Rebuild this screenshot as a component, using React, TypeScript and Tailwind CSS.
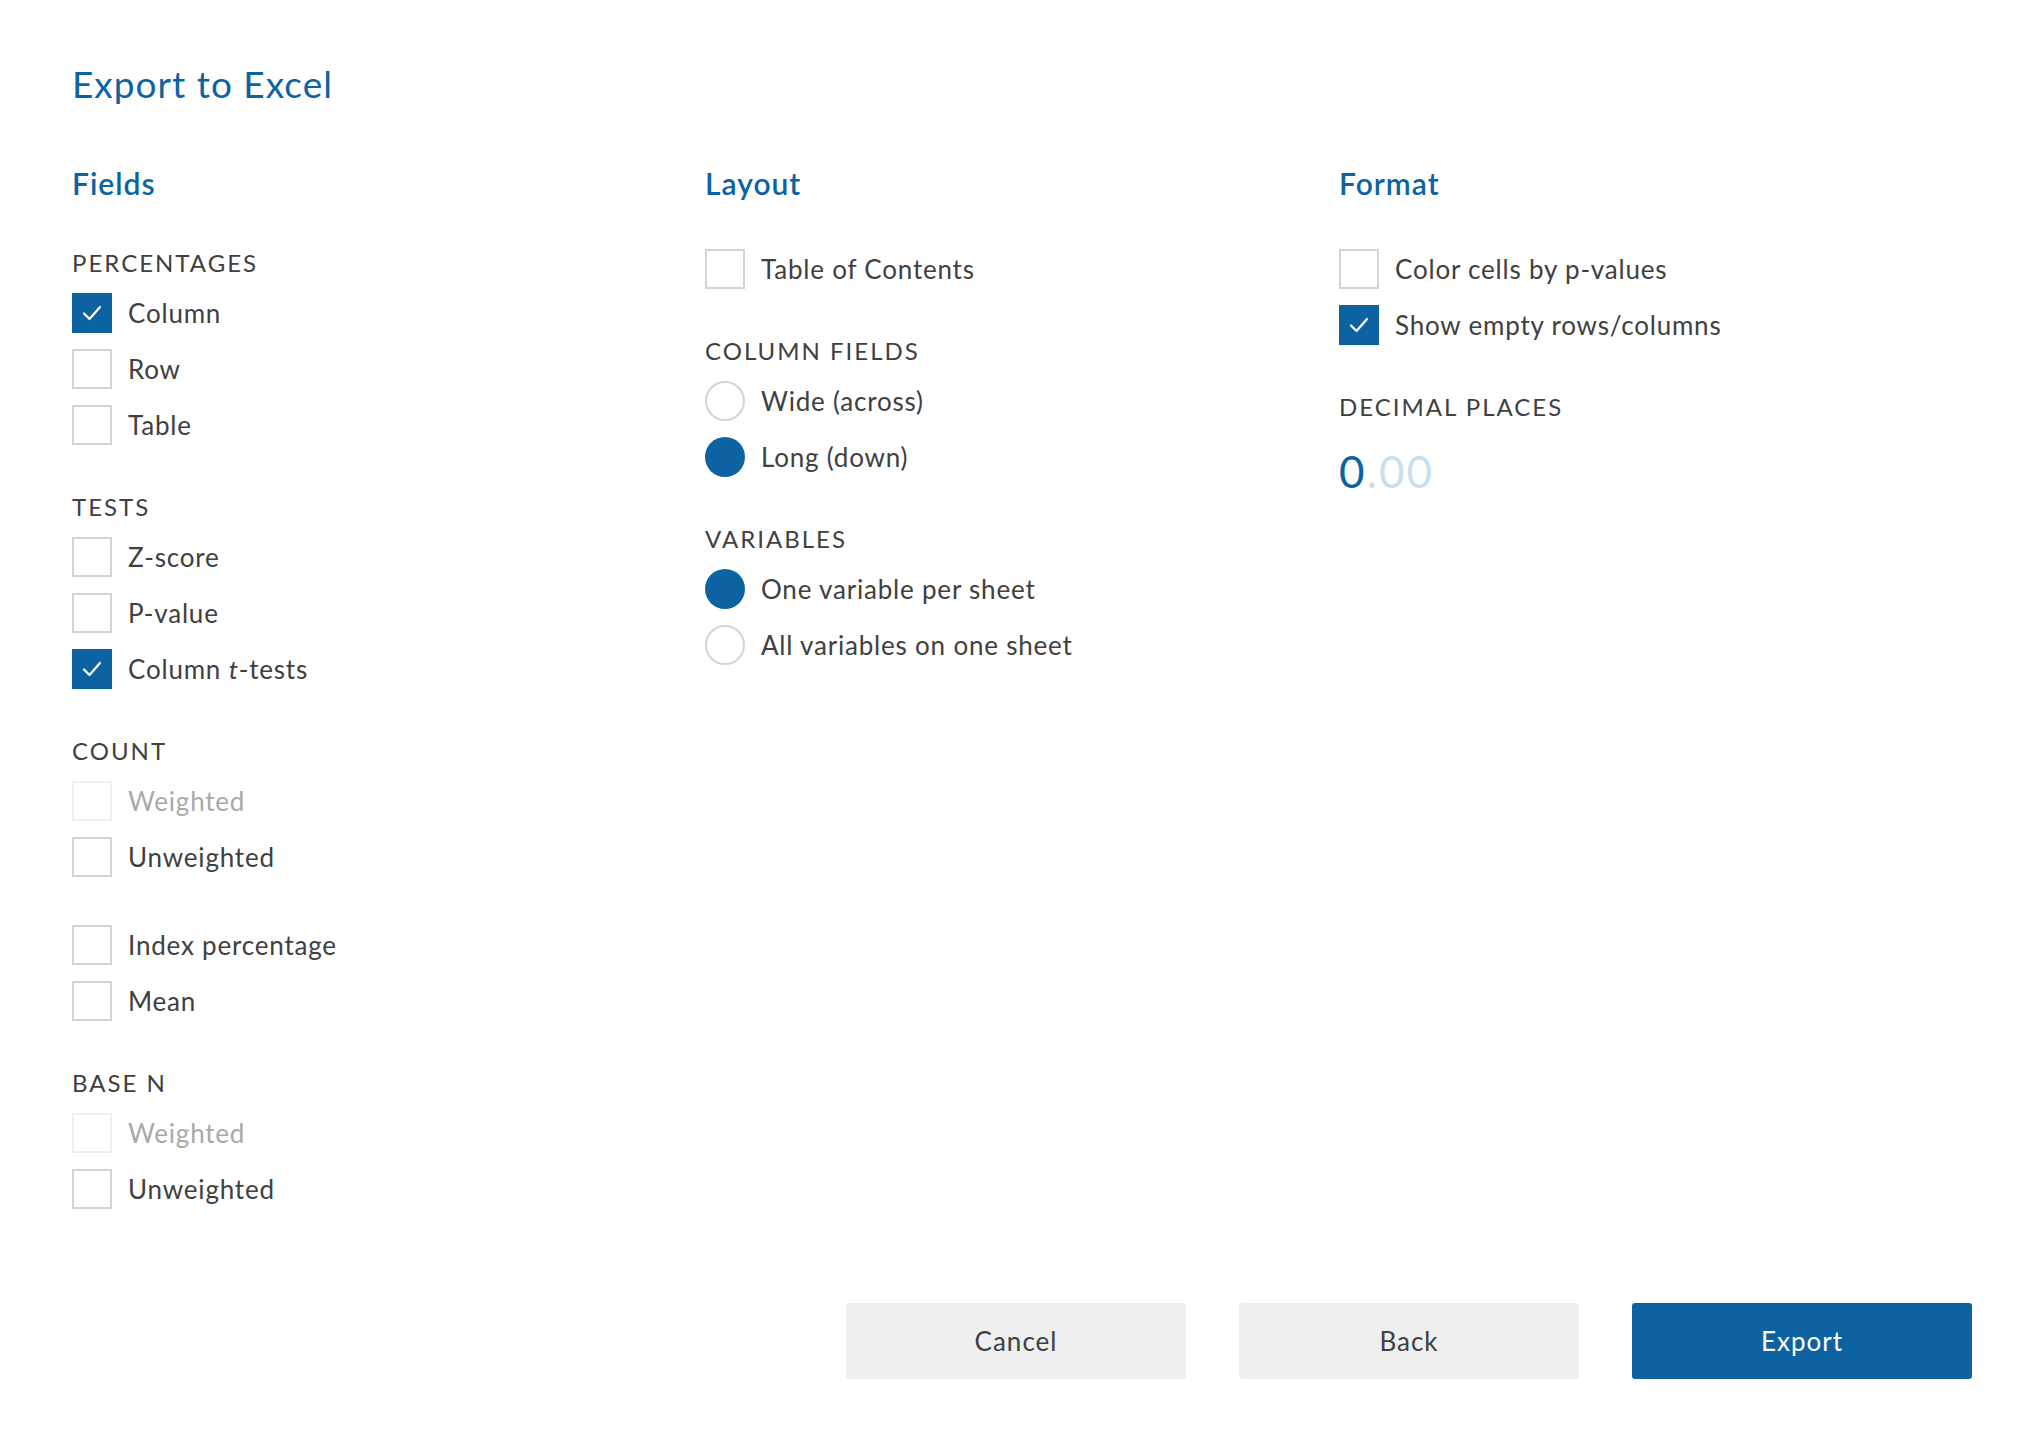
import { ReactNode } from 'react'

const BLUE = '#0d63a2'

function Check() {
  return (
    <svg width="20" height="16" viewBox="0 0 20 16" fill="none">
      <path d="M2 8.5 L7.5 14 L18 2" stroke="white" strokeWidth="2.2" strokeLinecap="round" strokeLinejoin="round" />
    </svg>
  )
}

function CheckboxRow({ label, checked, disabled }: { label: ReactNode; checked?: boolean; disabled?: boolean }) {
  return (
    <div className="flex h-[40px] items-center gap-[16px]">
      {checked ? (
        <div className="flex h-[40px] w-[40px] items-center justify-center bg-[#0d63a2]">
          <Check />
        </div>
      ) : (
        <div
          className={`h-[40px] w-[40px] border-2 bg-white ${disabled ? 'border-[#efefef]' : 'border-[#d4d4d4]'}`}
        />
      )}
      <span
        className={`text-[26px] leading-none tracking-[0.8px] ${disabled ? 'text-[#a9a9a9]' : 'text-[#404040]'}`}
      >
        {label}
      </span>
    </div>
  )
}

function RadioRow({ label, selected }: { label: string; selected?: boolean }) {
  return (
    <div className="flex h-[40px] items-center gap-[16px]">
      {selected ? (
        <div className="h-[40px] w-[40px] rounded-full bg-[#0d63a2]" />
      ) : (
        <div className="h-[40px] w-[40px] rounded-full border-2 border-[#d4d4d4] bg-white" />
      )}
      <span className="text-[26px] leading-none tracking-[0.8px] text-[#404040]">{label}</span>
    </div>
  )
}

function SubHeading({ children }: { children: ReactNode }) {
  return <div className="text-[24px] leading-[28px] tracking-[2px] text-[#404040]">{children}</div>
}

function Group({ title, children }: { title?: string; children: ReactNode }) {
  return (
    <div className="flex flex-col">
      {title && (
        <div className="mb-[16px]">
          <SubHeading>{title}</SubHeading>
        </div>
      )}
      <div className="flex flex-col gap-[16px]">{children}</div>
    </div>
  )
}

function Column({ heading, children }: { heading: string; children: ReactNode }) {
  return (
    <div className="flex flex-col">
      <h2 className="mb-[48px] text-[30px] font-semibold leading-[36px] tracking-[1px]" style={{ color: BLUE }}>
        {heading}
      </h2>
      <div className="flex flex-col gap-[48px]">{children}</div>
    </div>
  )
}

export default function App() {
  return (
    <div
      className="min-h-screen bg-white pl-[72px] pr-[64px] pt-[62px]"
      style={{ fontFamily: 'Lato, "Open Sans", sans-serif' }}
    >
      <h1 className="text-[37px] font-normal leading-[44px] tracking-[1px] text-[#0d63a2]">Export to Excel</h1>

      <div className="mt-[59px] grid grid-cols-[633px_634px_1fr]">
        <Column heading="Fields">
          <Group title="PERCENTAGES">
            <CheckboxRow label="Column" checked />
            <CheckboxRow label="Row" />
            <CheckboxRow label="Table" />
          </Group>
          <Group title="TESTS">
            <CheckboxRow label="Z-score" />
            <CheckboxRow label="P-value" />
            <CheckboxRow
              label={
                <>
                  Column <i>t</i>-tests
                </>
              }
              checked
            />
          </Group>
          <Group title="COUNT">
            <CheckboxRow label="Weighted" disabled />
            <CheckboxRow label="Unweighted" />
          </Group>
          <Group>
            <CheckboxRow label="Index percentage" />
            <CheckboxRow label="Mean" />
          </Group>
          <Group title="BASE N">
            <CheckboxRow label="Weighted" disabled />
            <CheckboxRow label="Unweighted" />
          </Group>
        </Column>

        <Column heading="Layout">
          <Group>
            <CheckboxRow label="Table of Contents" />
          </Group>
          <Group title="COLUMN FIELDS">
            <RadioRow label="Wide (across)" />
            <RadioRow label="Long (down)" selected />
          </Group>
          <Group title="VARIABLES">
            <RadioRow label="One variable per sheet" selected />
            <RadioRow label="All variables on one sheet" />
          </Group>
        </Column>

        <Column heading="Format">
          <Group>
            <CheckboxRow label="Color cells by p-values" />
            <CheckboxRow label="Show empty rows/columns" checked />
          </Group>
          <div className="flex flex-col">
            <SubHeading>DECIMAL PLACES</SubHeading>
            <div className="mt-[26px] text-[44px] leading-[48px] tracking-[2px]">
              <span className="text-[#0d63a2]">0</span>
              <span className="text-[#c9dff0]">.00</span>
            </div>
          </div>
        </Column>
      </div>

      <div className="mt-[94px] flex justify-end gap-[53px]">
        <button className="h-[76px] w-[340px] rounded-[3px] bg-[#efefef] text-[26px] tracking-[1px] text-[#404040]">
          Cancel
        </button>
        <button className="h-[76px] w-[340px] rounded-[3px] bg-[#efefef] text-[26px] tracking-[1px] text-[#404040]">
          Back
        </button>
        <button className="h-[76px] w-[340px] rounded-[3px] bg-[#0d63a2] text-[26px] tracking-[1px] text-white">
          Export
        </button>
      </div>
    </div>
  )
}
